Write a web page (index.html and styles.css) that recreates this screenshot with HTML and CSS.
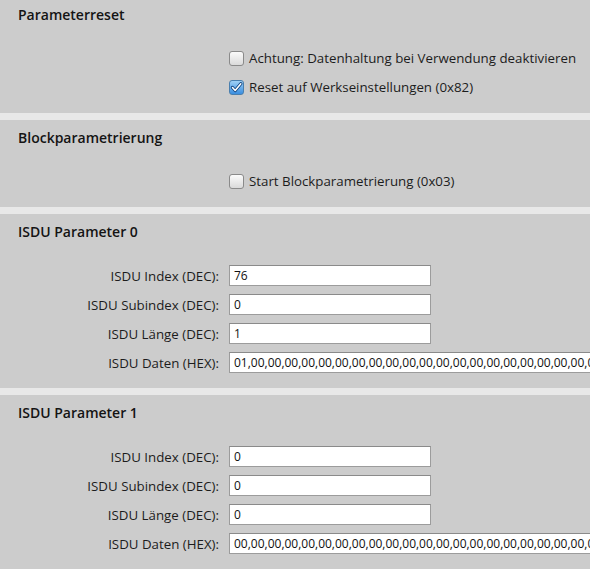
FILE: index.html
```html
<!DOCTYPE html>
<html lang="de">
<head>
    <meta charset="UTF-8">
    <title>Parameter</title>
    <link rel="stylesheet" href="styles.css">
</head>
<body>
    <div class="section first">
        <h2>Parameterreset</h2>
        <div class="check-list">
            <label class="check-row">
                <span class="box"></span>
                <span>Achtung: Datenhaltung bei Verwendung deaktivieren</span>
            </label>
            <label class="check-row">
                <span class="box checked">
                    <svg width="13" height="13" viewBox="0 0 13 13"><path d="M2.5 6.5 L5.2 9.5 L10.8 2.8" fill="none" stroke="#0d3f7a" stroke-width="3.2" stroke-linecap="round" stroke-linejoin="round"/><path d="M2.5 6.5 L5.2 9.5 L10.8 2.8" fill="none" stroke="#ffffff" stroke-width="1.6" stroke-linecap="round" stroke-linejoin="round"/></svg>
                </span>
                <span>Reset auf Werkseinstellungen (0x82)</span>
            </label>
        </div>
    </div>

    <div class="section">
        <h2>Blockparametrierung</h2>
        <div class="check-list">
            <label class="check-row">
                <span class="box"></span>
                <span>Start Blockparametrierung (0x03)</span>
            </label>
        </div>
    </div>

    <div class="section isdu-0">
        <h2>ISDU Parameter 0</h2>
        <div class="form-grid">
            <span class="field-label">ISDU Index (DEC):</span>
            <div class="field">76</div>
            <span class="field-label">ISDU Subindex (DEC):</span>
            <div class="field">0</div>
            <span class="field-label">ISDU Länge (DEC):</span>
            <div class="field">1</div>
            <span class="field-label">ISDU Daten (HEX):</span>
            <div class="field wide">01,00,00,00,00,00,00,00,00,00,00,00,00,00,00,00,00,00,00,00,00,00,00,00,00</div>
        </div>
    </div>

    <div class="section">
        <h2>ISDU Parameter 1</h2>
        <div class="form-grid">
            <span class="field-label">ISDU Index (DEC):</span>
            <div class="field">0</div>
            <span class="field-label">ISDU Subindex (DEC):</span>
            <div class="field">0</div>
            <span class="field-label">ISDU Länge (DEC):</span>
            <div class="field">0</div>
            <span class="field-label">ISDU Daten (HEX):</span>
            <div class="field wide">00,00,00,00,00,00,00,00,00,00,00,00,00,00,00,00,00,00,00,00,00,00,00,00,00</div>
        </div>
    </div>
</body>
</html>
```

FILE: styles.css
```css
body {
    margin: 0;
    background-color: #e8e8e8;
    font-family: "Open Sans", "Noto Sans", sans-serif;
    font-size: 13.3px;
    color: #1c1c1c;
    overflow: hidden;
    height: 569px;
}

.section {
    background-color: #cccccc;
    padding: 9px 0 16px 0;
    margin-top: 7px;
    overflow: hidden;
}

.section.first {
    margin-top: 0;
    padding-top: 6px;
}

.section.isdu-0 {
    padding-bottom: 15px;
}

h2 {
    margin: 0;
    padding-left: 18px;
    font-size: 14px;
    font-weight: 600;
    line-height: 18px;
    color: #141414;
}

.check-list {
    display: flex;
    flex-direction: column;
    gap: 9px;
    margin-top: 24px;
    padding-left: 229px;
}

.check-row {
    display: flex;
    align-items: center;
    gap: 5px;
    height: 20px;
    white-space: nowrap;
}

.box {
    width: 13px;
    height: 13px;
    border: 1px solid #8a8a8a;
    border-radius: 3px;
    background: linear-gradient(#fbfbfb, #dadada);
    display: flex;
    align-items: center;
    justify-content: center;
}

.box.checked {
    border-color: #4a7fae;
    background: linear-gradient(#9fd0f5, #3a8ee0);
}

.form-grid {
    display: grid;
    grid-template-columns: 219px auto;
    column-gap: 10px;
    row-gap: 8px;
    margin-top: 24px;
    align-items: center;
}

.field-label {
    text-align: right;
    white-space: nowrap;
}

.field {
    width: 194px;
    height: 19px;
    line-height: 19px;
    padding: 0 2px 0 4px;
    background: #ffffff;
    border: 1px solid #9c9c9c;
    border-top-color: #8a8a8a;
    color: #111111;
    font-size: 12px;
    white-space: nowrap;
    overflow: hidden;
}

.field.wide {
    width: 420px;
}
```
